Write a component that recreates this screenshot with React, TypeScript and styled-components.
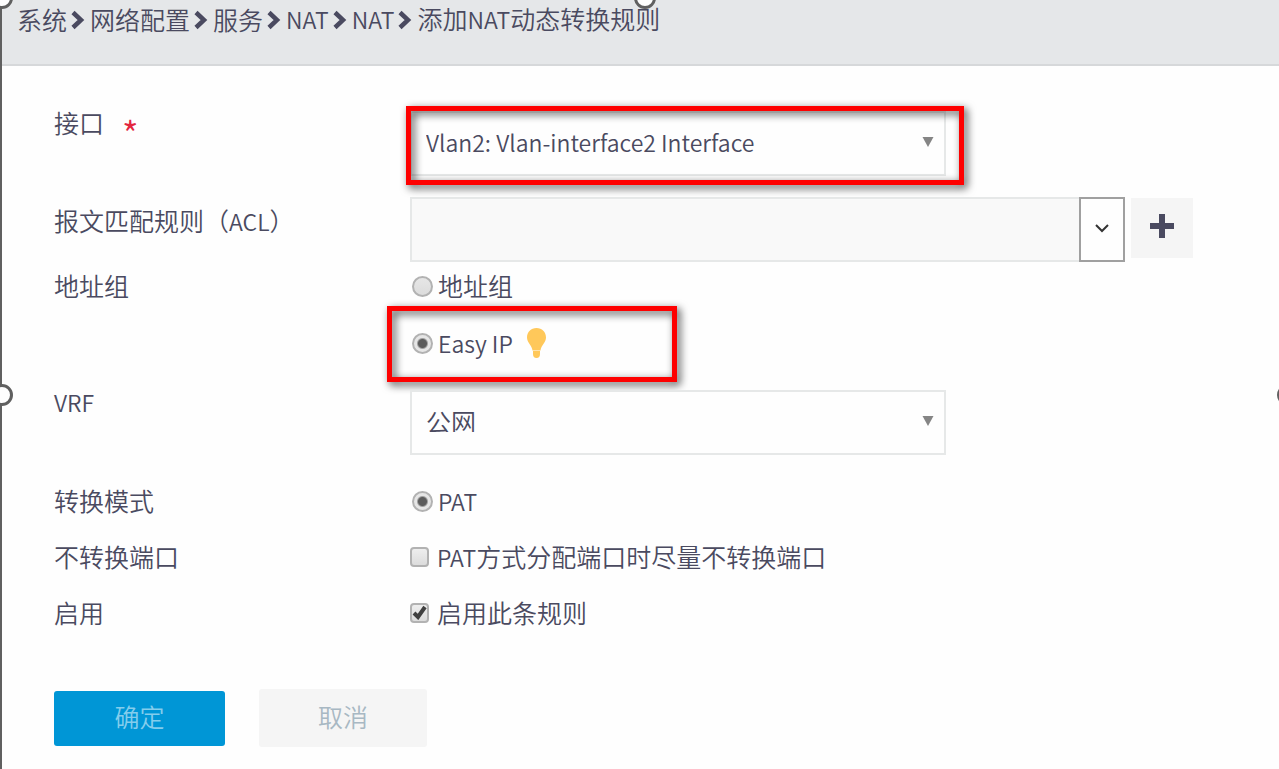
import React, { useState } from "react";
import styled, { createGlobalStyle, css } from "styled-components";

const ink = "#4a4a60";
const line = "#e6e8e8";

const GlobalStyle = createGlobalStyle`
  *, *::before, *::after { box-sizing: border-box; }
  body {
    margin: 0;
    background: #fefefe;
    color: ${ink};
    font: 350 25px/22px "Noto Sans CJK SC", "Noto Sans", sans-serif;
  }
  button, input, select { font: inherit; color: inherit; }
`;

const Page = styled.div`
  position: relative;
  min-height: 100vh;
  padding-left: 2px;
`;

const Header = styled.header`
  height: 66px;
  padding: 7px 15px;
  background: #e5e7e9;
  border-bottom: 2px solid #d6d8da;
`;

const Crumbs = styled.ol`
  display: flex;
  align-items: center;
  margin: 0;
  padding: 0;
  list-style: none;
  white-space: nowrap;
`;

const Crumb = styled.li`
  display: flex;
  align-items: center;

  a {
    color: inherit;
    text-decoration: none;
  }

  svg {
    margin: 2px 5px 0 4px;
  }
`;

const Latin = styled.span`
  font-size: 23px;
`;

const Form = styled.form`
  padding: 45px 86px 22px 52px;
`;

const Row = styled.div<{ $after: number }>`
  display: grid;
  grid-template-columns: 356px minmax(0, 1fr);
  align-items: start;
  margin-bottom: ${(p) => p.$after}px;
`;

const labelText = css`
  white-space: nowrap;
`;

const FieldLabel = styled.label<{ $inset?: boolean }>`
  ${labelText}
  padding-top: ${(p) => (p.$inset ? 12 : 0)}px;
`;

const RequiredLabel = styled(FieldLabel)`
  display: flex;
`;

const GroupLabel = styled.span`
  ${labelText}
`;

const Required = styled.span`
  margin-left: 18px;
  padding-top: 10px;
  color: #e3263f;
  font-size: 36px;
`;

const SelectBox = styled.div`
  position: relative;
  max-width: 536px;
`;

const Select = styled.select<{ $latin?: boolean }>`
  display: block;
  width: 100%;
  height: 65px;
  padding: 0 40px 3px 14px;
  appearance: none;
  border: 2px solid ${line};
  border-radius: 0;
  background: #fefefe;
  font-size: ${(p) => (p.$latin ? 23 : 25)}px;
`;

const SelectArrow = styled.svg`
  position: absolute;
  top: 26px;
  right: 12px;
  pointer-events: none;
`;

const Callout = styled.div`
  position: absolute;
  border: 5px solid #fe0000;
  filter: drop-shadow(3px 3px 4px rgba(0, 0, 0, 0.75));
  pointer-events: none;
`;

const SelectCallout = styled(Callout)`
  inset: -5px -18px -9px -4px;
`;

const OptionCallout = styled(Callout)`
  inset: -25px auto -27px -23px;
  width: 290px;
`;

const Combo = styled.div`
  display: flex;
  align-items: flex-start;
`;

const ComboInput = styled.input`
  flex: 1;
  min-width: 0;
  height: 65px;
  padding: 0 15px;
  border: 2px solid ${line};
  border-right: 0;
  border-radius: 0;
  background: #f9f9f9;
`;

const IconButton = styled.button`
  display: flex;
  align-items: center;
  justify-content: center;
  padding: 0;
`;

const ComboToggle = styled(IconButton)`
  width: 46px;
  height: 65px;
  padding-bottom: 3px;
  border: 2px solid #a0a0a0;
  background: #fefefe;
`;

const AddButton = styled(IconButton)`
  width: 62px;
  height: 60px;
  margin: 1px 0 0 6px;
  padding-bottom: 4px;
  border: 0;
  background: #f5f5f5;
`;

const Options = styled.div`
  display: flex;
  flex-direction: column;
  align-items: flex-start;
  gap: 33px;
`;

const Option = styled.div`
  position: relative;
  display: flex;
  align-items: center;
  height: 24px;
  white-space: nowrap;

  label {
    padding-bottom: 2px;
  }

  > svg {
    margin-left: 14px;
  }
`;

const Radio = styled.input`
  flex: none;
  width: 21px;
  height: 21px;
  margin: 0 5px 0 2px;
  appearance: none;
  border: 2px solid #b2b2b2;
  border-radius: 50%;
  background: linear-gradient(#e6e6e6, #dcdcdc);

  &:checked {
    background: radial-gradient(circle, #5c5c5c 4px, #e6e6e6 6px);
  }
`;

const CheckBox = styled.span`
  position: relative;
  flex: none;
  width: 19px;
  height: 20px;
  margin-right: 8px;

  svg {
    position: absolute;
    inset: 2px;
    pointer-events: none;
  }
`;

const Check = styled.input`
  display: block;
  width: 100%;
  height: 100%;
  margin: 0;
  appearance: none;
  border: 2px solid #b2b2b2;
  border-radius: 4px;
  background: linear-gradient(#eeeeee, #dcdcdc);
`;

const Actions = styled.div`
  display: flex;
  align-items: center;
  gap: 34px;
`;

const Button = styled.button<{ $primary?: boolean }>`
  width: ${(p) => (p.$primary ? 171 : 168)}px;
  height: ${(p) => (p.$primary ? 55 : 58)}px;
  padding: 0 0 4px;
  border: 0;
  border-radius: 3px;
  background: ${(p) => (p.$primary ? "#0096d6" : "#f5f5f5")};
  color: ${(p) => (p.$primary ? "#84cdec" : "#a8b8c3")};
`;

const FrameClip = styled.div`
  position: absolute;
  inset: 0;
  overflow: hidden;
  pointer-events: none;
`;

const Frame = styled.div`
  position: absolute;
  inset: -4px -11px -24px 0;
  border: 2px solid #606060;
`;

const Handle = styled.span<{ $x: number; $y: number }>`
  position: absolute;
  left: ${(p) => p.$x}%;
  top: ${(p) => p.$y}%;
  width: 22px;
  height: 22px;
  margin: -11px;
  border: 3px solid #606060;
  border-radius: 50%;
  background: #fefefe;
`;

const trail = ["系统", "网络配置", "服务", "NAT", "NAT", "添加NAT动态转换规则"];

const handles = [
  [0, 0],
  [50, 0],
  [0, 50],
  [100, 50],
];

// Latin runs are set a little smaller than the Chinese text around them.
const Mixed = ({ text }: { text: string }) => (
  <>
    {text
      .split(/([A-Za-z ]+)/)
      .filter(Boolean)
      .map((part, i) => (/[A-Za-z]/.test(part) ? <Latin key={i}>{part}</Latin> : part))}
  </>
);

const Chevron = () => (
  <svg width="14" height="20" viewBox="0 0 14 20" aria-hidden="true">
    <path d="M2 2.500l8 7.500-8 7.500" fill="none" stroke={ink} strokeWidth="4.500" />
  </svg>
);

const Triangle = () => (
  <SelectArrow width="12" height="10" viewBox="0 0 12 10" aria-hidden="true">
    <path d="M0.500 0h11L6 10z" fill="#858585" />
  </SelectArrow>
);

const Bulb = () => (
  <svg width="19" height="30" viewBox="0 0 19 30" aria-hidden="true">
    <path
      d="M9.500 0C4 0 0 4 0 9.500c0 5 5 8 5.500 13h8C14 17.500 19 14.500 19 9.500 19 4 15 0 9.500 0zM6 22h7v4q0 4-3.500 4T6 26z"
      fill="#ffc85a"
    />
  </svg>
);

function CheckField({ id, checked, onChange }: { id: string; checked: boolean; onChange: (v: boolean) => void }) {
  return (
    <CheckBox>
      <Check id={id} type="checkbox" checked={checked} onChange={(e) => onChange(e.target.checked)} />
      {checked && (
        <svg width="15" height="15" viewBox="0 0 15 15" aria-hidden="true">
          <path d="M2 8l4 4 7-10" fill="none" stroke="#404040" strokeWidth="4" />
        </svg>
      )}
    </CheckBox>
  );
}

export default function App() {
  const [source, setSource] = useState("easy");
  const [keepPort, setKeepPort] = useState(false);
  const [enabled, setEnabled] = useState(true);

  return (
    <>
      <GlobalStyle />
      <Page>
        <Header>
          <nav aria-label="breadcrumb">
            <Crumbs>
              {trail.map((name, i) => (
                <Crumb key={i}>
                  {i > 0 && <Chevron />}
                  <a href="#">
                    <Mixed text={name} />
                  </a>
                </Crumb>
              ))}
            </Crumbs>
          </nav>
        </Header>

        <Form onSubmit={(e) => e.preventDefault()}>
          <Row $after={21}>
            <RequiredLabel htmlFor="port">
              接口<Required>*</Required>
            </RequiredLabel>
            <SelectBox>
              <Select id="port" $latin>
                <option>Vlan2: Vlan-interface2 Interface</option>
              </Select>
              <Triangle />
              <SelectCallout />
            </SelectBox>
          </Row>

          <Row $after={12}>
            <FieldLabel htmlFor="acl" $inset>
              <Mixed text="报文匹配规则（ACL）" />
            </FieldLabel>
            <Combo>
              <ComboInput id="acl" type="text" />
              <ComboToggle type="button" aria-label="ACL">
                <svg width="16" height="10" viewBox="0 0 16 10" aria-hidden="true">
                  <path d="M2 2l6 6 6-6" fill="none" stroke="#333" strokeWidth="2" />
                </svg>
              </ComboToggle>
              <AddButton type="button" aria-label="+">
                <svg width="24" height="24" viewBox="0 0 24 24" aria-hidden="true">
                  <path d="M12 0v24M0 12h24" stroke={ink} strokeWidth="6" />
                </svg>
              </AddButton>
            </Combo>
          </Row>

          <Row $after={35} role="radiogroup" aria-labelledby="source-label">
            <GroupLabel id="source-label">地址组</GroupLabel>
            <Options>
              <Option>
                <Radio
                  id="source-group"
                  type="radio"
                  name="source"
                  checked={source === "group"}
                  onChange={() => setSource("group")}
                />
                <label htmlFor="source-group">地址组</label>
              </Option>
              <Option>
                <Radio
                  id="source-easy"
                  type="radio"
                  name="source"
                  checked={source === "easy"}
                  onChange={() => setSource("easy")}
                />
                <label htmlFor="source-easy">
                  <Mixed text="Easy IP" />
                </label>
                <Bulb />
                <OptionCallout />
              </Option>
            </Options>
          </Row>

          <Row $after={34}>
            <FieldLabel htmlFor="vrf">
              <Mixed text="VRF" />
            </FieldLabel>
            <SelectBox>
              <Select id="vrf">
                <option>公网</option>
              </Select>
              <Triangle />
            </SelectBox>
          </Row>

          <Row $after={32} role="radiogroup" aria-labelledby="mode-label">
            <GroupLabel id="mode-label">转换模式</GroupLabel>
            <Option>
              <Radio id="mode-pat" type="radio" name="mode" defaultChecked />
              <label htmlFor="mode-pat">
                <Mixed text="PAT" />
              </label>
            </Option>
          </Row>

          <Row $after={32}>
            <GroupLabel>不转换端口</GroupLabel>
            <Option>
              <CheckField id="keep-port" checked={keepPort} onChange={setKeepPort} />
              <label htmlFor="keep-port">
                <Mixed text="PAT方式分配端口时尽量不转换端口" />
              </label>
            </Option>
          </Row>

          <Row $after={64}>
            <GroupLabel>启用</GroupLabel>
            <Option>
              <CheckField id="enabled" checked={enabled} onChange={setEnabled} />
              <label htmlFor="enabled">启用此条规则</label>
            </Option>
          </Row>

          <Actions>
            <Button type="submit" $primary>
              确定
            </Button>
            <Button type="button">取消</Button>
          </Actions>
        </Form>

        <FrameClip>
          <Frame>
            {handles.map(([x, y]) => (
              <Handle key={`${x}-${y}`} $x={x} $y={y} />
            ))}
          </Frame>
        </FrameClip>
      </Page>
    </>
  );
}
